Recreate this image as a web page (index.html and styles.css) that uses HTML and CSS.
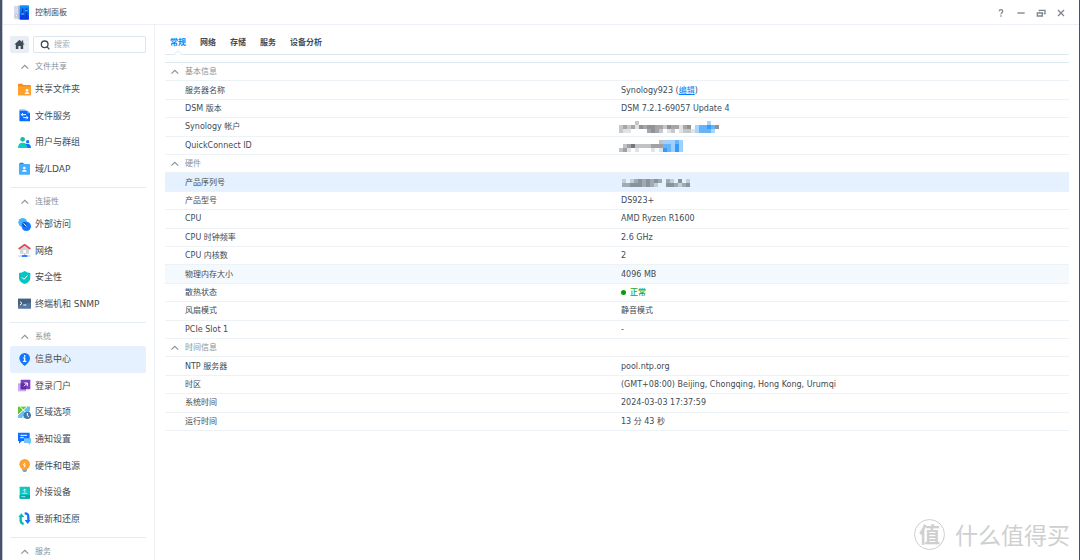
FILE: index.html
```html
<!DOCTYPE html>
<html lang="zh-CN">
<head>
<meta charset="utf-8">
<title>控制面板</title>
<link rel="stylesheet" href="styles.css">
</head>
<body>
<div class="window">
  <header class="titlebar">
    <svg class="app-icon" viewBox="0 0 45 45" aria-hidden="true">
      <defs><linearGradient id="lg" x2="0" y2="1"><stop offset="0" stop-color="#0a9bff"/><stop offset="1" stop-color="#0530e8"/></linearGradient></defs>
      <rect x="0" y="2" width="17" height="41" rx="2" fill="#d5dcec"/>
      <rect x="12" y="2" width="5" height="41" fill="#b4bedb"/>
      <circle cx="7" cy="32" r="4" fill="#f5f7fc" stroke="#98a5c4" stroke-width="2"/>
      <rect x="17" y="1" width="28" height="43" rx="2" fill="url(#lg)"/>
      <path d="M26 10v26M37 10v26" stroke="#0634b8" stroke-width="3"/>
      <path d="M23 27h6M34 17h6" stroke="#5fb8ff" stroke-width="4"/>
    </svg>
    <h1 class="title">控制面板</h1>
    <div class="controls">
      <button class="control" aria-label="帮助"><svg viewBox="0 0 30 30"><path d="M10 10q0-5 5-5t5 5q0 3-3 5-2 1-2 4M15 22v4"/></svg></button>
      <button class="control" aria-label="最小化"><svg viewBox="0 0 30 30"><path d="M4 15h22"/></svg></button>
      <button class="control" aria-label="还原"><svg viewBox="0 0 30 30"><path d="M4 15h15v9H4zM10 10V7h17v10h-4"/></svg></button>
      <button class="control" aria-label="关闭"><svg viewBox="0 0 30 30"><path d="M6 6l18 18M24 6L6 24"/></svg></button>
    </div>
  </header>

  <div class="body">
    <nav class="sidebar">
      <div class="tools">
        <button class="home" aria-label="主页"><svg viewBox="0 0 30 30"><path d="M15 2L1 15h4v12h7v-8h6v8h7V15h4l-4-4V4h-4v4z"/></svg></button>
        <label class="search">
          <svg viewBox="0 0 30 30" aria-hidden="true"><circle cx="14" cy="13" r="10"/><path d="M21 20l7 8"/></svg>
          <input type="search" placeholder="搜索" aria-label="搜索">
        </label>
      </div>

      <section class="group">
        <button class="group-head"><svg class="caret" viewBox="0 0 21 15"><path d="M1 12l9-9 9 9"/></svg>文件共享</button>
        <ul class="items">
          <li><a class="item" href="#"><svg viewBox="0 0 39 39"><path d="M0 5q0-3 3-3h9l4 4h20q3 0 3 3v25q0 3-3 3H3q-3 0-3-3z" fill="#f58b13"/><path d="M0 10h39v24q0 3-3 3H3q-3 0-3-3z" fill="#ff9f2e"/><circle cx="27" cy="22" r="4" fill="#fff"/><path d="M20 33q0-6 7-6t7 6z" fill="#fff"/></svg>共享文件夹</a></li>
          <li><a class="item" href="#"><svg viewBox="0 0 39 39"><path d="M3 3q0-2 2-2h16l4 5v29H3z" fill="#9ccaff"/><path d="M5 5h23l8 8v22q0 2-2 2H5z" fill="#0a6cff"/><path d="M28 5v8h8z" fill="#69adff"/><path d="M24 17H11m4-5l-5 5 5 5M16 26h14m-5-5l5 5-5 5" fill="none" stroke="#fff" stroke-width="3"/></svg>文件服务</a></li>
          <li><a class="item" href="#"><svg viewBox="0 0 39 39"><circle cx="14" cy="10" r="7" fill="#0bbfae"/><path d="M0 36q0-16 14-16t14 16z" fill="#0bcdbd"/><circle cx="29" cy="17" r="5" fill="#1a6dff"/><path d="M22 24q16-3 17 12H28q0-8-6-12z" fill="#0f72ff"/></svg>用户与群组</a></li>
          <li><a class="item" href="#"><svg viewBox="0 0 39 39"><path d="M4 5q0-3 3-3h8l3 4h16v10H4z" fill="#1e85e8"/><rect x="3" y="6" width="33" height="32" rx="2" fill="#45aeff"/><circle cx="19" cy="18" r="4" fill="#fff"/><path d="M12 29q0-6 7-6t7 6z" fill="#fff"/></svg>域/LDAP</a></li>
        </ul>
      </section>

      <section class="group">
        <button class="group-head"><svg class="caret" viewBox="0 0 21 15"><path d="M1 12l9-9 9 9"/></svg>连接性</button>
        <ul class="items">
          <li><a class="item" href="#"><svg viewBox="0 0 39 39"><circle cx="14" cy="13" r="13" fill="#48b4ff"/><circle cx="25" cy="25" r="14" fill="#1479ff"/><path d="M12 17q2-5 7-6 7 3 8 12-2 4-7 4-8-3-8-10z" fill="#0757d8"/><path d="M17 16l8 9" stroke="#fff" stroke-width="3"/></svg>外部访问</a></li>
          <li><a class="item" href="#"><svg viewBox="0 0 39 39"><path d="M6 13L20 3l13 10v16H6z" fill="#d0d5dc"/><path d="M2 15L20 2l17 13" fill="none" stroke="#e34747" stroke-width="5"/><rect x="16" y="18" width="8" height="9" fill="#fff"/><path d="M1 36h37" stroke="#b9c2cc" stroke-width="3"/><path d="M20 29v5" stroke="#8793a1" stroke-width="2"/><path d="M12 36h16" stroke="#1769ff" stroke-width="5"/></svg>网络</a></li>
          <li><a class="item" href="#"><svg viewBox="0 0 39 39"><path d="M20 0q8 6 17 6v14q0 13-17 19Q3 33 3 20V6q9 0 17-6z" fill="#06c6c3"/><path d="M12 19l6 6 10-11" fill="none" stroke="#fff" stroke-width="3"/></svg>安全性</a></li>
          <li><a class="item" href="#"><svg viewBox="0 0 39 39"><rect y="5" width="39" height="30" rx="1" fill="#54779e"/><path d="M0 5h39v12L0 24z" fill="#44627f"/><path d="M6 14l6 5-6 5M16 24h9" fill="none" stroke="#fff" stroke-width="3"/></svg>终端机和 SNMP</a></li>
        </ul>
      </section>

      <section class="group">
        <button class="group-head"><svg class="caret" viewBox="0 0 21 15"><path d="M1 12l9-9 9 9"/></svg>系统</button>
        <ul class="items items-long">
          <li><a class="item active" href="#" aria-current="page"><svg viewBox="0 0 39 39"><path d="M20 0a16 16 0 0 1 16 16q0 11-16 23Q4 27 4 16A16 16 0 0 1 20 0z" fill="#1478ff"/><path d="M20 6v5M16 15h4v10M15 25h10" fill="none" stroke="#fff" stroke-width="4"/></svg>信息中心</a></li>
          <li><a class="item" href="#"><svg viewBox="0 0 39 39"><rect y="13" width="24" height="24" fill="#c6a9f2"/><rect x="8" y="2" width="29" height="29" rx="1" fill="#7c3fc0"/><path d="M8 13h16v18H8z" fill="#5d2da5"/><path d="M18 22l9-9M19 12h9v9" fill="none" stroke="#fff" stroke-width="3"/></svg>登录门户</a></li>
          <li><a class="item" href="#"><svg viewBox="0 0 39 39"><rect y="2" width="36" height="34" fill="#68c52e"/><path d="M0 27L27 2h9v15L14 36H0z" fill="#63c1fa"/><path d="M0 27L27 2M12 36l24-20M6 2l16 16" stroke="#fff" stroke-width="3"/><circle cx="28" cy="28" r="11" fill="#4a77a6"/><path d="M28 21v8l5 3" fill="none" stroke="#fff" stroke-width="3"/></svg>区域选项</a></li>
          <li><a class="item" href="#"><svg viewBox="0 0 39 39"><path d="M0 2h35v25H12l-9 8v-8H0z" fill="#0f70ff"/><path d="M18 19h21v14h-3v5l-6-5H18z" fill="#70c3ff"/><path d="M7 10h20M7 17h10" stroke="#fff" stroke-width="3"/></svg>通知设置</a></li>
          <li><a class="item" href="#"><svg viewBox="0 0 39 39"><path d="M20 0a16 16 0 0 1 16 16q0 7-8 15H12Q4 23 4 16A16 16 0 0 1 20 0z" fill="#ffa12e"/><path d="M13 31h14v4l-4 4h-6l-4-4z" fill="#929baa"/><path d="M21 11l-5 7h6l-4 7" fill="none" stroke="#fff" stroke-width="3"/></svg>硬件和电源</a></li>
          <li><a class="item" href="#"><svg viewBox="0 0 39 39"><rect x="5" y="2" width="31" height="36" rx="2" fill="#10c6c2"/><path d="M5 27h31v9q0 2-2 2H7q-2 0-2-2z" fill="#05a8a9"/><path d="M20 20V9m-5 5l5-5 5 5M13 22h15M10 32h12" fill="none" stroke="#fff" stroke-width="2"/></svg>外接设备</a></li>
          <li><a class="item" href="#"><svg viewBox="0 0 39 39"><path d="M17 36Q7 34 8 23V13" fill="none" stroke="#05bdb5" stroke-width="7"/><path d="M1 15L10 4l9 11z" fill="#05bdb5"/><path d="M20 4q12 0 11 12v9" fill="none" stroke="#176fff" stroke-width="7"/><path d="M20 24h18L29 36z" fill="#176fff"/></svg>更新和还原</a></li>
        </ul>
      </section>

      <section class="group">
        <button class="group-head"><svg class="caret" viewBox="0 0 21 15"><path d="M1 12l9-9 9 9"/></svg>服务</button>
      </section>
    </nav>

    <main class="main">
      <div class="tabs" role="tablist">
        <button class="tab selected" role="tab" aria-selected="true">常规<svg class="notch" viewBox="0 0 24 15" aria-hidden="true"><path d="M0 15L12 2l12 13z"/><path class="edge" d="M0 13L12 2l12 11"/></svg></button>
        <button class="tab" role="tab">网络</button>
        <button class="tab" role="tab">存储</button>
        <button class="tab" role="tab">服务</button>
        <button class="tab" role="tab">设备分析</button>
      </div>

      <table class="info">
        <tbody>
          <tr><th class="section" colspan="2"><button class="section-head"><svg class="caret" viewBox="0 0 21 15"><path d="M1 12l9-9 9 9"/></svg>基本信息</button></th></tr>
          <tr><th>服务器名称</th><td>Synology923 (<a class="link" href="#">编辑</a>)</td></tr>
          <tr><th>DSM 版本</th><td>DSM 7.2.1-69057 Update 4</td></tr>
          <tr><th>Synology 帐户</th><td><svg class="mosaic" viewBox="0 0 25 3" role="img" aria-label="已隐藏">
            <path fill="#e2e3e5" d="M1 2h2v1H1zM4 1h1v1H4zM12 2h1v1h-1zM15 1h1v2h-1zM18 2h1v1h-1z"/>
            <path fill="#c6c8cb" d="M0 1h1v2H0zM2 1h1v1H2zM4 0h1v1H4zM11 1h1v1h-1zM13 2h1v1h-1zM16 2h2v1h-2zM10 2h1v1h-1z"/>
            <path fill="#a4a6a9" d="M1 1h1v1H1zM3 1h1v1H3zM6 1h1v1H6zM7 2h1v1H7zM9 1h2v1H9zM9 2h1v1H9zM13 1h2v1h-2zM16 1h1v1h-1z"/>
            <path fill="#909295" d="M5 1h1v1H5zM7 1h2v1H7zM8 2h1v1H8zM12 1h1v1h-1zM17 1h1v1h-1zM24 1h1v1h-1z"/>
            <path fill="#a9d6ff" d="M19 1h1v1h-1zM19 2h1v1h-1zM23 2h1v1h-1zM22 0h1v1h-1z"/><path fill="#65b3f8" d="M20 1h2v1h-2zM20 2h3v1h-3zM23 1h1v1h-1z"/><path fill="#399cf5" d="M22 1h1v1h-1z"/>
          </svg></td></tr>
          <tr><th>QuickConnect ID</th><td><svg class="mosaic mosaic-short" viewBox="0 0 16 3" role="img" aria-label="已隐藏">
            <path fill="#e2e3e5" d="M2 2h1v1H2zM4 2h1v1H4zM8 2h1v1H8zM10 2h1v1h-1z"/>
            <path fill="#c0c2c5" d="M0 2h1v1H0zM1 1h1v1H1zM4 1h3v1H4zM7 1h1v1H7zM10 0h1v1h-1z"/>
            <path fill="#a0a2a5" d="M1 2h1v1H1zM2 1h1v1H2zM8 1h3v1H8z"/><path fill="#75777a" d="M3 1h1v1H3z"/>
            <path fill="#a0d0ff" d="M11 0h3v1h-3zM13 1h1v2h-1zM15 0h1v3h-1z"/><path fill="#68b5fb" d="M11 1h1v1h-1zM12 2h1v1h-1zM14 0h1v1h-1zM12 1h1v1h-1z"/><path fill="#349bf6" d="M11 2h1v1h-1zM14 1h1v2h-1z"/>
          </svg></td></tr>
        </tbody>
        <tbody>
          <tr><th class="section" colspan="2"><button class="section-head"><svg class="caret" viewBox="0 0 21 15"><path d="M1 12l9-9 9 9"/></svg>硬件</button></th></tr>
          <tr class="row-selected"><th>产品序列号</th><td><svg class="mosaic mosaic-serial" viewBox="0 0 17 2" role="img" aria-label="已隐藏">
            <path fill="#c3cdd6" d="M0 0h1v1H0zM2 0h1v1H2zM8 1h1v1H8zM12 0h1v1h-1zM14 1h1v1h-1zM16 0h1v1h-1z"/>
            <path fill="#a0aab3" d="M0 1h2v1H0zM3 0h1v1H3zM5 0h1v2H5zM7 0h1v2H7zM9 0h1v1H9zM11 0h1v1h-1zM13 1h1v1h-1zM15 1h1v1h-1z"/>
            <path fill="#89939b" d="M2 1h2v1H2zM4 0h1v2H4zM6 0h1v2H6zM8 0h1v1H8zM11 1h2v1h-2zM14 0h1v1h-1zM16 1h1v1h-1z"/>
          </svg></td></tr>
          <tr><th>产品型号</th><td>DS923+</td></tr>
          <tr><th>CPU</th><td>AMD Ryzen R1600</td></tr>
          <tr><th>CPU 时钟频率</th><td>2.6 GHz</td></tr>
          <tr><th>CPU 内核数</th><td>2</td></tr>
          <tr class="row-hover"><th>物理内存大小</th><td>4096 MB</td></tr>
          <tr><th>散热状态</th><td><span class="status">正常</span></td></tr>
          <tr><th>风扇模式</th><td>静音模式</td></tr>
          <tr><th>PCIe Slot 1</th><td>-</td></tr>
        </tbody>
        <tbody>
          <tr><th class="section" colspan="2"><button class="section-head"><svg class="caret" viewBox="0 0 21 15"><path d="M1 12l9-9 9 9"/></svg>时间信息</button></th></tr>
          <tr><th>NTP 服务器</th><td>pool.ntp.org</td></tr>
          <tr><th>时区</th><td>(GMT+08:00) Beijing, Chongqing, Hong Kong, Urumqi</td></tr>
          <tr><th>系统时间</th><td>2024-03-03 17:37:59</td></tr>
          <tr><th>运行时间</th><td>13 分 43 秒</td></tr>
        </tbody>
      </table>
    </main>
  </div>
  <div class="watermark"><span class="seal">值</span>什么值得买</div>
</div>
</body>
</html>
```

FILE: styles.css
```css
* { box-sizing: border-box; }

body {
  margin: 0;
  background: #465268;
  color: #414b55;
  font: 8px/16px "DejaVu Sans", "Noto Sans CJK SC", sans-serif;
}

button, input {
  margin: 0;
  padding: 0;
  border: 0;
  background: none;
  color: inherit;
  font: inherit;
}

svg { display: block; flex: none; }

.window {
  position: relative;
  display: flex;
  flex-direction: column;
  height: 100vh;
  margin: 0 1px 0 2px;
  border-left: 1px solid #c3c9d2;
  background: #fff;
  overflow: hidden;
}

.titlebar {
  display: flex;
  flex: none;
  align-items: center;
  gap: 6px;
  height: 25px;
  padding: 1px 8px 0 11px;
  border-bottom: 1px solid #edf0f6;
}

.app-icon { width: 15px; height: 15px; }

.title {
  flex: 1;
  margin: 0;
  font-size: 8px;
  font-weight: 400;
}

.controls { display: flex; }

.control {
  display: flex;
  align-items: center;
  justify-content: center;
  width: 20px;
  height: 20px;
}

.control svg {
  width: 10px;
  height: 10px;
  fill: none;
  stroke: #7c8591;
  stroke-width: 4;
}

.body { display: flex; flex: 1; min-height: 0; }

.sidebar {
  flex: none;
  width: 152px;
  padding: 11px 8px 0 7px;
  border-right: 1px solid #edf1f6;
  overflow: hidden;
}

.tools { display: flex; gap: 4px; height: 17px; }

.home {
  display: flex;
  flex: none;
  align-items: center;
  justify-content: center;
  width: 19px;
  border-radius: 2px;
  background: #e9eef4;
}

.home svg { width: 11px; height: 11px; fill: #414b55; }

.search {
  display: flex;
  flex: 1;
  align-items: center;
  gap: 4px;
  min-width: 0;
  padding: 0 6px;
  border: 1px solid #dbe5ed;
  border-radius: 2px;
}

.search svg {
  width: 10px;
  height: 10px;
  fill: none;
  stroke: #414b55;
  stroke-width: 4;
}

.search input { flex: 1; min-width: 0; height: 15px; outline: 0; appearance: none; }
.search input::placeholder { color: #a8b0b8; }

.group + .group { margin-top: 5px; border-top: 1px solid #e3ebf4; }

.group-head {
  display: flex;
  align-items: center;
  gap: 6px;
  width: 100%;
  height: 23px;
  padding: 4px 0 0 11px;
  color: #89929b;
}

.caret {
  width: 8px;
  height: 6px;
  fill: none;
  stroke: #89929b;
  stroke-width: 3;
}

.items {
  display: grid;
  grid-auto-rows: 1fr;
  min-height: 106px;
  margin: 0;
  padding: 0;
  list-style: none;
}

.items-long { min-height: 186px; }

.item {
  display: flex;
  align-items: center;
  gap: 4px;
  height: 100%;
  padding: 0 8px;
  border-radius: 2px;
  color: inherit;
  font-size: 9px;
  text-decoration: none;
}

.item svg { width: 13px; height: 13px; }
.item.active { background: #e5f1fe; }

.main {
  flex: 1;
  min-width: 0;
  padding: 10px 10px 0;
  overflow: auto;
}

.tabs {
  display: flex;
  gap: 14px;
  height: 20px;
  padding-left: 5px;
  border-bottom: 1px solid #dce8f0;
}

.tab {
  position: relative;
  height: 16px;
  font-weight: 700;
}

.tab.selected { color: #0581f5; }

.notch {
  position: absolute;
  bottom: -4px;
  left: 4px;
  width: 8px;
  height: 5px;
  fill: #fff;
}

.notch .edge { fill: none; stroke: #dce8f0; stroke-width: 3; }

.info {
  width: 100%;
  height: 369px;
  margin-top: 7px;
  border-top: 1px solid #dfe9f0;
  border-spacing: 0;
  table-layout: fixed;
}

.info th, .info td {
  width: 50%;
  padding: 1px 4px 0;
  border-bottom: 1px solid #edf2f6;
  font-weight: 400;
  text-align: left;
  vertical-align: middle;
}

.info th { padding-left: 20px; }
.info .section { padding-left: 6px; }

.section-head {
  display: flex;
  align-items: center;
  gap: 6px;
  color: #89929b;
}

.row-selected { background: #e5f1fe; }
.row-hover { background: #f4f9fe; }

.link { color: #0581f5; }

.status {
  display: flex;
  align-items: center;
  gap: 4px;
  color: #15a81b;
  font-weight: 500;
}

.status::before {
  width: 5px;
  height: 5px;
  border-radius: 50%;
  background: #079b0b;
  content: "";
}

.mosaic {
  width: 100px;
  height: 12px;
  margin-left: -2px;
  shape-rendering: crispEdges;
}

.mosaic-short { width: 64px; }
.mosaic-serial { width: 68px; height: 8px; margin-left: 1px; }

.watermark {
  position: absolute;
  right: 9px;
  bottom: 10px;
  display: flex;
  align-items: center;
  gap: 10px;
  color: #cfcfcf;
  font: 23px/32px "Noto Sans CJK SC", sans-serif;
  pointer-events: none;
}

.seal {
  width: 31px;
  height: 31px;
  border: 1px solid #cfcfcf;
  border-radius: 50%;
  font-size: 21px;
  font-weight: 700;
  line-height: 27px;
  text-align: center;
}
```
